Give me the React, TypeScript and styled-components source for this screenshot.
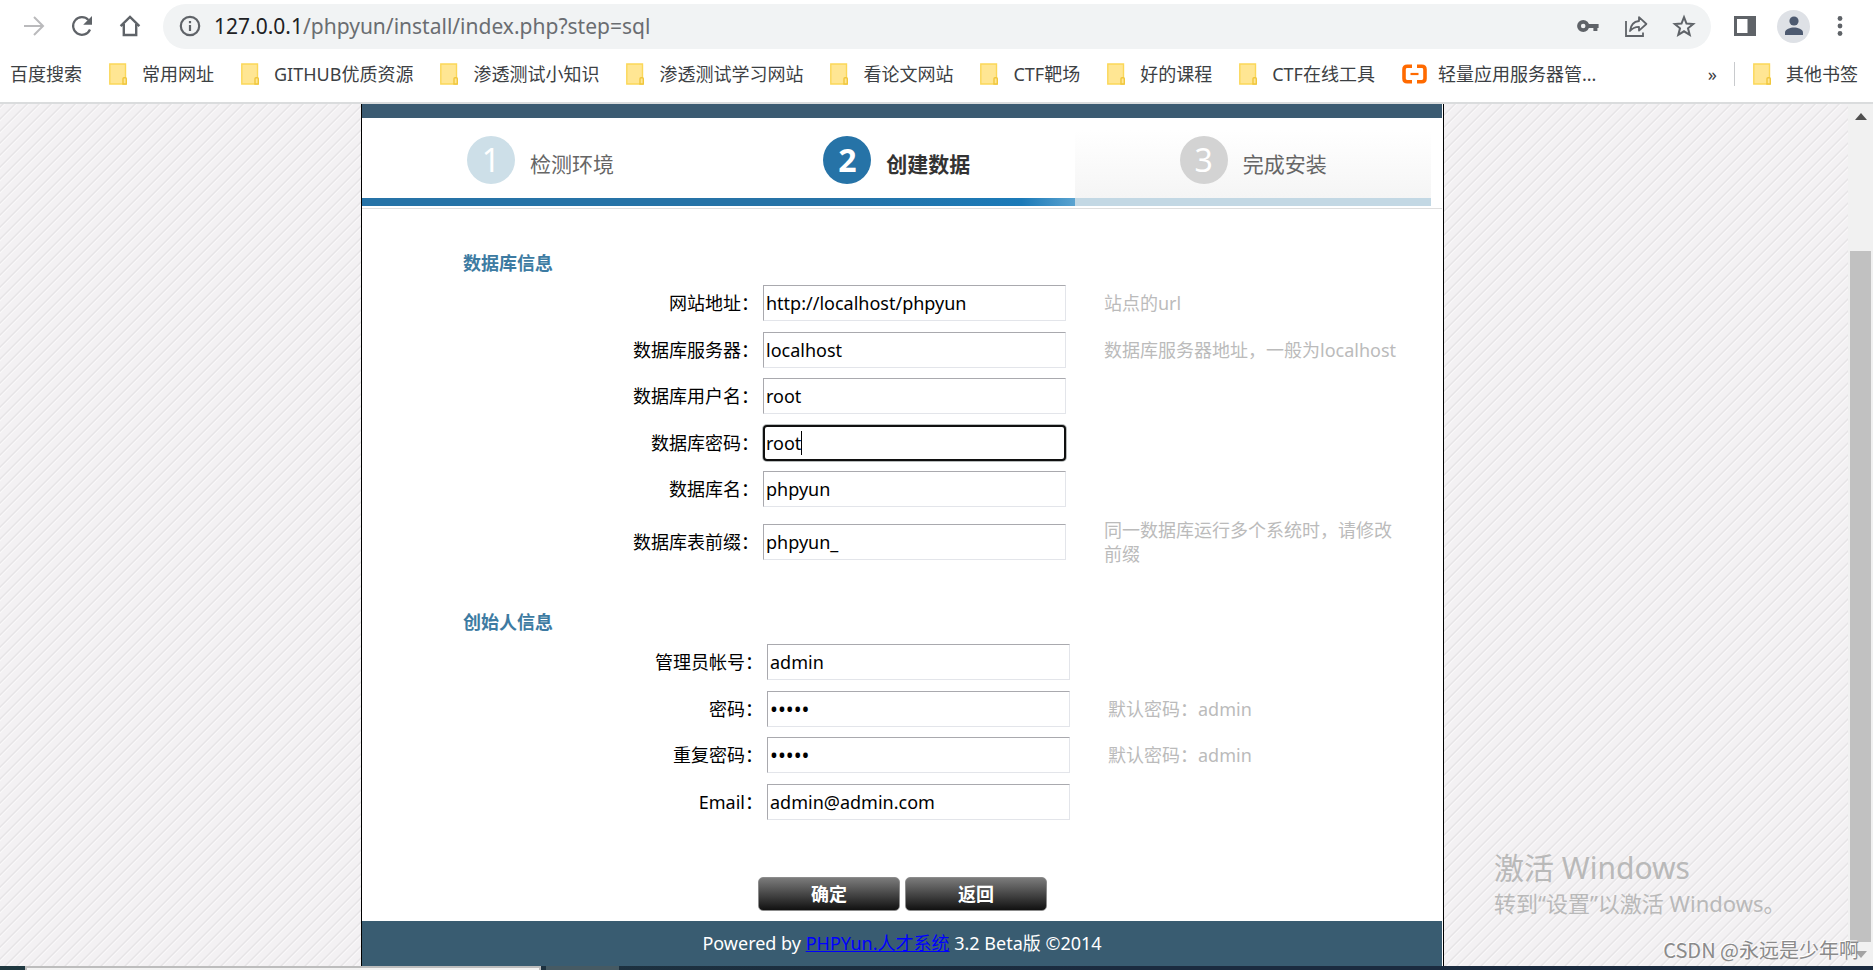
import React from 'react';
import styled, { createGlobalStyle, css } from 'styled-components';

const GlobalStyle = createGlobalStyle`
  *, *::before, *::after { box-sizing: border-box; }
  body {
    margin: 0;
    background: #fff;
    color: #000;
    font-family: 'Noto Sans', 'Noto Sans CJK SC', sans-serif;
    font-size: 18px;
    line-height: 24px;
  }
  button, input { font: inherit; }
  h2, p { margin: 0; }
`;

/* ---------- browser frame ---------- */

const Shell = styled.div`
  display: flex;
  flex-direction: column;
  min-height: 100vh;
`;

const Toolbar = styled.header`
  display: flex;
  align-items: center;
  height: 52px;
  padding: 0 21px 0 22px;
  color: #5f6368;
`;

const IconButton = styled.button<{ $dim?: boolean; $after?: number }>`
  display: flex;
  align-items: center;
  justify-content: center;
  flex: none;
  width: 24px;
  height: 24px;
  margin: 0 ${(p) => p.$after ?? 24}px 0 0;
  padding: 0;
  border: 0;
  background: none;
  color: ${(p) => (p.$dim ? '#bababc' : '#5f6368')};
`;

const AddressBar = styled.div`
  display: flex;
  align-items: center;
  flex: 1;
  height: 45px;
  margin-right: 22px;
  padding: 0 15px;
  border-radius: 23px;
  background: #f1f3f4;
`;

const Address = styled.div`
  flex: 1;
  padding-left: 12px;
  font-size: 21px;
  color: #6a6d71;

  b {
    font-weight: 400;
    color: #202124;
  }
`;

const Avatar = styled.button`
  display: flex;
  align-items: center;
  justify-content: center;
  flex: none;
  width: 33px;
  height: 33px;
  margin-right: 18px;
  padding: 0;
  border: 0;
  border-radius: 50%;
  background: #dee1e6;
`;

const Bookmarks = styled.nav`
  display: flex;
  align-items: center;
  gap: 27px;
  height: 52px;
  padding: 0 15px 6px 10px;
  border-bottom: 2px solid #dadcdd;
`;

const Bookmark = styled.a<{ $tight?: boolean }>`
  display: flex;
  align-items: center;
  gap: ${(p) => (p.$tight ? 11 : 15)}px;
  color: #3c4043;
  text-decoration: none;
  white-space: nowrap;
`;

const More = styled.button`
  margin-left: auto;
  margin-right: -10px;
  padding: 0;
  border: 0;
  background: none;
  color: #3c4043;
`;

const Rule = styled.span`
  width: 1px;
  height: 24px;
  margin-right: -9px;
  background: #c8cacd;
`;

/* ---------- page ---------- */

const Viewport = styled.div`
  position: relative;
  display: flex;
  flex: 1;
`;

const Backdrop = styled.main`
  display: flex;
  justify-content: center;
  flex: 1;
  padding-right: 43px;
  background: #f3f1f3
    linear-gradient(
      135deg,
      #f3f1f3 6%,
      #e6e4e6 11%,
      #e6e4e6 14%,
      #faf9fa 21%,
      #f3f1f3 26%,
      #f3f1f3 56%,
      #e6e4e6 61%,
      #e6e4e6 64%,
      #faf9fa 71%,
      #f3f1f3 76%
    )
    0 0 / 12px 12px;
`;

const Panel = styled.div`
  display: flex;
  flex-direction: column;
  width: 1083px;
  padding-right: 1px;
  border: solid #000;
  border-width: 0 1px;
  background: #fff;
`;

const TopStripe = styled.div`
  height: 14px;
  background: #3b5b72;
`;

const Steps = styled.ol`
  display: flex;
  margin: 0;
  padding: 0 11px 2px 0;
  border-bottom: 1px solid #dedede;
  list-style: none;
`;

type StepState = 'done' | 'current' | 'next';

const stepBars: Record<StepState, string> = {
  done: '#2673a7',
  current: 'linear-gradient(90deg, #2673a7 30%, #1b7ab8 85%, #5aa3d0)',
  next: '#c3d8e4',
};

const discColors: Record<StepState, string> = {
  done: '#cddfe8',
  current: '#2673a7',
  next: '#d3d3d3',
};

const Step = styled.li<{ $state: StepState }>`
  display: flex;
  align-items: center;
  flex: 1;
  gap: 15px;
  height: 88px;
  padding: 0 0 4px 105px;
  font-size: 21px;
  color: #666;
  background: linear-gradient(#fff, #fff) 0 0 / 100% 80px no-repeat, ${(p) => stepBars[p.$state]};
  ${(p) =>
    p.$state === 'current' &&
    css`
      color: #333;
      font-weight: 700;
    `}
  ${(p) =>
    p.$state === 'next' &&
    css`
      background: linear-gradient(#fff 15%, #f5f5f5) 0 0 / 100% 80px no-repeat, ${stepBars.next};
    `}
`;

const Disc = styled.span<{ $state: StepState }>`
  display: flex;
  align-items: center;
  justify-content: center;
  width: 48px;
  height: 48px;
  border-radius: 50%;
  background: ${(p) => discColors[p.$state]};
  color: #fff;
  font-size: 32px;
  line-height: 48px;
`;

const StepName = styled.span`
  padding-top: 8px;
`;

const InstallForm = styled.form`
  flex: 1;
  padding: 42px 0 10px 101px;
`;

const SectionTitle = styled.h2`
  margin-bottom: 10px;
  font-size: 18px;
  line-height: 24px;
  color: #3d7ba2;
`;

const Rows = styled.div<{ $labelWidth: number; $minHeight: number; $after: number }>`
  --label-width: ${(p) => p.$labelWidth}px;
  display: flex;
  flex-direction: column;
  justify-content: space-between;
  min-height: ${(p) => p.$minHeight}px;
  margin-bottom: ${(p) => p.$after}px;
`;

const Row = styled.div`
  display: grid;
  grid-template-columns: var(--label-width) 307px 300px;
  align-items: center;
`;

const Label = styled.label`
  text-align: right;
`;

const Field = styled.div`
  position: relative;
  margin-left: 4px;
`;

const TextBox = styled.input<{ $active?: boolean }>`
  display: block;
  width: 100%;
  height: 36px;
  padding: 0 2px;
  border: 1px solid;
  border-color: #a9a9ae #e3e5ea #e3e5ea #a9a9ae;
  background: #fff;
  color: #000;
  outline: none;

  &[type='password'] {
    font-size: 21px;
  }

  ${(p) =>
    p.$active &&
    css`
      padding: 0 1px;
      border: 2px solid #101010;
      border-radius: 4px;
      box-shadow: 0 0 0 1px #b8bcbc;
    `}
`;

const Caret = styled.span`
  position: absolute;
  top: 6px;
  left: 38px;
  width: 1px;
  height: 24px;
  background: #000;
`;

const Hint = styled.p`
  padding-left: 38px;
  width: 338px;
  color: #bbb;
`;

const Actions = styled.div`
  display: flex;
  gap: 5px;
  padding-left: 295px;
`;

const ActionButton = styled.button`
  width: 142px;
  height: 34px;
  padding: 0;
  border: 1px solid #8c8c8c;
  border-radius: 5px;
  background: linear-gradient(#7b7b7b, #4c4c4c 45%, #111);
  color: #fff;
  font-weight: 700;
`;

const Footer = styled.footer`
  height: 45px;
  background: #395c71;
  color: #fff;
  text-align: center;
  line-height: 44px;

  a { color: #00f; }
`;

const ScrollTrack = styled.div`
  display: flex;
  flex-direction: column;
  align-items: center;
  width: 25px;
  background: #f1f1f1;
`;

const ScrollArrow = styled.span`
  display: flex;
  align-items: center;
  height: 24px;
`;

const ScrollGap = styled.span`
  flex: 123;
`;

const ScrollThumb = styled.span`
  flex: 691;
  width: 21px;
  background: #c1c1c1;
`;

const ActivationNotice = styled.div`
  position: absolute;
  right: 88px;
  bottom: 48px;
  width: 291px;
  color: #b9b9b9;
  font-size: 22px;
  line-height: 30px;
  white-space: nowrap;

  strong {
    display: block;
    font-size: 30px;
    font-weight: 400;
    line-height: 40px;
  }
`;

const AuthorMark = styled.div`
  position: absolute;
  right: 14px;
  bottom: 2px;
  color: #8a8a8a;
  font-family: 'Noto Sans CJK SC', sans-serif;
  font-size: 20px;
  line-height: 28px;
  text-shadow: -1px -1px 0 #fff;
  white-space: nowrap;
`;

const Taskbar = styled.div`
  display: flex;
  height: 4px;
  padding-left: 25px;
  background: linear-gradient(90deg, #1f3840, #1b2b3f 60%);
`;

const TaskWindow = styled.span`
  width: 516px;
  margin-right: 5px;
  border: solid #bdbdbd;
  border-width: 2px 2px 0;
  background: #f3f3f3;
`;

const TaskButton = styled.span`
  width: 73px;
  background: #465a63;
`;

/* ---------- icons ---------- */

const ForwardIcon = () => (
  <svg width="22" height="22" viewBox="0 0 22 22" fill="none" stroke="currentColor" strokeWidth="2">
    <path d="M1 11h19M11 2l9 9-9 9" />
  </svg>
);

const ReloadIcon = () => (
  <svg width="24" height="24" viewBox="0 0 24 24">
    <path d="M20 15.5A8.8 8.8 0 1 1 18.4 6" fill="none" stroke="currentColor" strokeWidth="2.2" />
    <path d="M22 2v8.8h-8.8z" fill="currentColor" />
  </svg>
);

const HomeIcon = () => (
  <svg width="24" height="24" viewBox="0 0 24 24" fill="none" stroke="currentColor" strokeWidth="2.4">
    <path d="M2.6 12.2 12 3l9.4 9.2M5.8 10v11h12.4V10" />
  </svg>
);

const InfoIcon = () => (
  <svg width="24" height="24" viewBox="0 0 24 24" fill="none" stroke="#5f6368">
    <circle cx="12" cy="12" r="9.2" strokeWidth="2.2" />
    <path d="M12 11v6M12 7v2.2" strokeWidth="2.2" />
  </svg>
);

const KeyIcon = () => (
  <svg width="24" height="24" viewBox="0 0 24 24" fill="none" stroke="currentColor">
    <circle cx="7.2" cy="12" r="4.2" strokeWidth="3.8" />
    <path d="M11 12h11.6M19.4 12v5" strokeWidth="4" />
  </svg>
);

const ShareIcon = () => (
  <svg width="24" height="24" viewBox="0 0 24 24" fill="none" stroke="currentColor" strokeWidth="1.8">
    <path d="M2 7v15h17v-3.5" />
    <path d="M15 3.2 22.4 10 15 16.6v-3.8c-4 0-6.6 1-9 4.2.6-5.6 3.5-9.4 9-10z" strokeLinejoin="round" />
  </svg>
);

const StarIcon = () => (
  <svg width="24" height="24" viewBox="0 0 24 24" fill="none" stroke="currentColor" strokeWidth="2">
    <path d="m12 3.2 2.5 6.3 6.7.5-5.2 4.3 1.7 6.6L12 17.3l-5.7 3.6L8 14.3 2.8 10l6.7-.5z" />
  </svg>
);

const SidePanelIcon = () => (
  <svg width="22" height="22" viewBox="0 0 22 22">
    <path d="M0 1h22v20H0zM3 4v14h10.5V4z" fill="currentColor" fillRule="evenodd" />
  </svg>
);

const PersonIcon = () => (
  <svg width="20" height="20" viewBox="0 0 20 20" fill="#4d5a70">
    <circle cx="10" cy="5" r="4.6" />
    <path d="M1 19v-2.5c0-3.500 5.500-5 9-5s9 1.500 9 5V19z" />
  </svg>
);

const DotsIcon = () => (
  <svg width="6" height="22" viewBox="0 0 6 22" fill="currentColor">
    <circle cx="3" cy="3.5" r="2.4" />
    <circle cx="3" cy="11" r="2.4" />
    <circle cx="3" cy="18.5" r="2.4" />
  </svg>
);

const FolderIcon = () => (
  <svg width="18" height="22" viewBox="0 0 18 22" fill="#ffe693" stroke="#fbd758" strokeWidth="1.4">
    <path d="M.8 1h15.7v20H.8z" />
    <path d="M14 21v-5.2q0-1 1-1h1.3q1 0 1 1V21z" stroke="#f0c63c" />
  </svg>
);

const CloudIcon = () => (
  <svg width="25" height="20" viewBox="0 0 25 20" fill="none" stroke="#ff6a00">
    <path
      d="M10 2.2H5.2Q2 2.2 2 5.4v9.2q0 3.2 3.2 3.2H10M15 2.2h4.8q3.2 0 3.2 3.2v9.2q0 3.2-3.2 3.2H15"
      strokeWidth="3.6"
    />
    <path d="M8.5 10h8" strokeWidth="2.2" />
  </svg>
);

const Triangle = ({ down = false }: { down?: boolean }) => (
  <svg width="12" height="7" viewBox="0 0 12 7" fill={down ? '#a3a3a3' : '#505050'}>
    <path d={down ? 'M0 0h12L6 7z' : 'M0 7h12L6 0z'} />
  </svg>
);

/* ---------- data ---------- */

const folders = [
  '常用网址',
  'GITHUB优质资源',
  '渗透测试小知识',
  '渗透测试学习网站',
  '看论文网站',
  'CTF靶场',
  '好的课程',
  'CTF在线工具',
];

const steps: { name: string; state: StepState }[] = [
  { name: '检测环境', state: 'done' },
  { name: '创建数据', state: 'current' },
  { name: '完成安装', state: 'next' },
];

interface FieldData {
  id: string;
  label: string;
  value: string;
  hint?: string;
  type?: string;
  active?: boolean;
}

const databaseFields: FieldData[] = [
  { id: 'site-url', label: '网站地址', value: 'http://localhost/phpyun', hint: '站点的url' },
  { id: 'db-host', label: '数据库服务器', value: 'localhost', hint: '数据库服务器地址\uff0c一般为localhost' },
  { id: 'db-user', label: '数据库用户名', value: 'root' },
  { id: 'db-pass', label: '数据库密码', value: 'root', active: true },
  { id: 'db-name', label: '数据库名', value: 'phpyun' },
  {
    id: 'db-prefix',
    label: '数据库表前缀',
    value: 'phpyun_',
    hint: '同一数据库运行多个系统时\uff0c请修改前缀',
  },
];

const founderFields: FieldData[] = [
  { id: 'admin-name', label: '管理员帐号', value: 'admin' },
  { id: 'admin-pass', label: '密码', value: 'admin', type: 'password', hint: '默认密码\uff1aadmin' },
  { id: 'admin-pass2', label: '重复密码', value: 'admin', type: 'password', hint: '默认密码\uff1aadmin' },
  { id: 'admin-email', label: 'Email', value: 'admin@admin.com' },
];

const FieldRow = ({ field }: { field: FieldData }) => (
  <Row>
    <Label htmlFor={field.id}>{`${field.label}\uff1a`}</Label>
    <Field>
      <TextBox id={field.id} type={field.type ?? 'text'} defaultValue={field.value} $active={field.active} />
      {field.active && <Caret />}
    </Field>
    {field.hint && <Hint>{field.hint}</Hint>}
  </Row>
);

export default function App() {
  return (
    <>
      <GlobalStyle />
      <Shell>
        <Toolbar>
          <IconButton $dim aria-label="前进"><ForwardIcon /></IconButton>
          <IconButton aria-label="重新加载"><ReloadIcon /></IconButton>
          <IconButton $after={21} aria-label="主页"><HomeIcon /></IconButton>
          <AddressBar>
            <InfoIcon />
            <Address><b>127.0.0.1</b>/phpyun/install/index.php?step=sql</Address>
            <IconButton aria-label="密码"><KeyIcon /></IconButton>
            <IconButton aria-label="分享"><ShareIcon /></IconButton>
            <IconButton $after={0} aria-label="收藏"><StarIcon /></IconButton>
          </AddressBar>
          <IconButton $after={20} aria-label="侧边栏"><SidePanelIcon /></IconButton>
          <Avatar aria-label="个人资料"><PersonIcon /></Avatar>
          <IconButton $after={0} aria-label="菜单"><DotsIcon /></IconButton>
        </Toolbar>
        <Bookmarks>
          <Bookmark href="#">百度搜索</Bookmark>
          {folders.map((name) => (
            <Bookmark href="#" key={name}><FolderIcon />{name}</Bookmark>
          ))}
          <Bookmark href="#" $tight><CloudIcon />轻量应用服务器管...</Bookmark>
          <More aria-label="更多书签">»</More>
          <Rule />
          <Bookmark href="#"><FolderIcon />其他书签</Bookmark>
        </Bookmarks>
        <Viewport>
          <Backdrop>
            <Panel>
              <TopStripe />
              <Steps>
                {steps.map((step, i) => (
                  <Step key={step.name} $state={step.state}>
                    <Disc $state={step.state}>{i + 1}</Disc>
                    <StepName>{step.name}</StepName>
                  </Step>
                ))}
              </Steps>
              <InstallForm onSubmit={(e) => e.preventDefault()}>
                <SectionTitle>数据库信息</SectionTitle>
                <Rows $labelWidth={296} $minHeight={281} $after={44}>
                  {databaseFields.map((f) => <FieldRow key={f.id} field={f} />)}
                </Rows>
                <SectionTitle>创始人信息</SectionTitle>
                <Rows $labelWidth={300} $minHeight={176} $after={57}>
                  {founderFields.map((f) => <FieldRow key={f.id} field={f} />)}
                </Rows>
                <Actions>
                  <ActionButton type="submit">确定</ActionButton>
                  <ActionButton type="button">返回</ActionButton>
                </Actions>
              </InstallForm>
              <Footer>
                Powered by <a href="#">PHPYun.人才系统</a> 3.2 Beta版 ©2014
              </Footer>
            </Panel>
          </Backdrop>
          <ScrollTrack>
            <ScrollArrow><Triangle /></ScrollArrow>
            <ScrollGap />
            <ScrollThumb />
            <ScrollArrow><Triangle down /></ScrollArrow>
          </ScrollTrack>
          <ActivationNotice>
            <strong>激活 Windows</strong>
            转到“设置”以激活 Windows。
          </ActivationNotice>
          <AuthorMark>CSDN @永远是少年啊</AuthorMark>
        </Viewport>
        <Taskbar>
          <TaskWindow />
          <TaskButton />
        </Taskbar>
      </Shell>
    </>
  );
}
